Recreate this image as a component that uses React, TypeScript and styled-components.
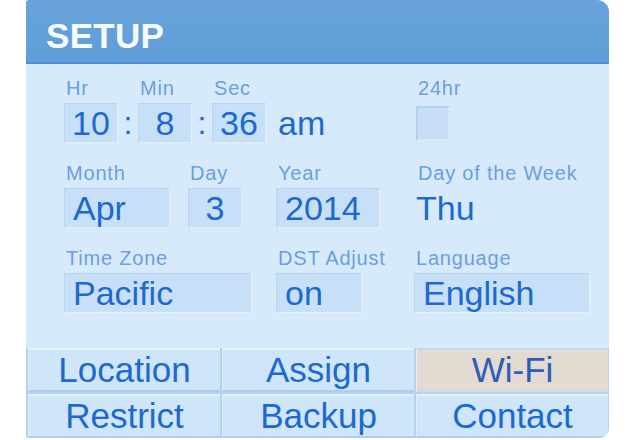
import React from "react";
import styled, { createGlobalStyle } from "styled-components";

const GlobalStyle = createGlobalStyle`
  html, body {
    margin: 0;
    padding: 0;
    background: #ffffff;
  }
  body {
    font-family: "Liberation Sans", Arial, sans-serif;
  }
`;

const buttons = [
  { label: "Location" },
  { label: "Assign" },
  { label: "Wi-Fi", active: true },
  { label: "Restrict" },
  { label: "Backup" },
  { label: "Contact" },
];

export default function App() {
  return (
    <>
      <GlobalStyle />
      <Page>
        <Screen>
          <Header>
            <Title>SETUP</Title>
          </Header>
          <Form>
            <Row>
              <Field $w={54}>
                <Label>Hr</Label>
                <Box $align="center">10</Box>
              </Field>
              <Colon>:</Colon>
              <Field $w={54}>
                <Label>Min</Label>
                <Box $align="center">8</Box>
              </Field>
              <Colon>:</Colon>
              <Field $w={54}>
                <Label>Sec</Label>
                <Box $align="center">36</Box>
              </Field>
              <Plain $ml={12}>am</Plain>
              <PushedField $w={174}>
                <Label>24hr</Label>
                <CheckSlot>
                  <Check />
                </CheckSlot>
              </PushedField>
            </Row>
            <Row>
              <Field $w={106}>
                <Label>Month</Label>
                <Box>Apr</Box>
              </Field>
              <Field $w={54} $ml={18}>
                <Label>Day</Label>
                <Box $align="center">3</Box>
              </Field>
              <Field $w={104} $ml={34}>
                <Label>Year</Label>
                <Box>2014</Box>
              </Field>
              <Field $w={174} $ml={36}>
                <Label>Day of the Week</Label>
                <Plain>Thu</Plain>
              </Field>
            </Row>
            <Row>
              <Field $w={188}>
                <Label>Time Zone</Label>
                <Box>Pacific</Box>
              </Field>
              <Field $w={86} $ml={24}>
                <Label>DST Adjust</Label>
                <Box>on</Box>
              </Field>
              <Field $w={176} $ml={52}>
                <Label>Language</Label>
                <Box>English</Box>
              </Field>
            </Row>
          </Form>
          <ButtonGrid>
            {buttons.map(b => (
              <MenuButton key={b.label} $active={b.active}>
                {b.label}
              </MenuButton>
            ))}
          </ButtonGrid>
        </Screen>
      </Page>
    </>
  );
}

const Page = styled.div`
  width: 640px;
  height: 440px;
  padding-left: 26px;
  box-sizing: border-box;
`;

const Screen = styled.div`
  width: 583px;
  height: 438px;
  display: flex;
  flex-direction: column;
  background: #d7eafb;
  border-radius: 3px 12px 10px 2px;
  overflow: hidden;
`;

const Header = styled.div`
  height: 64px;
  box-sizing: border-box;
  padding: 16px 0 0 20px;
  background: linear-gradient(180deg, #68a3da 0%, #609dd7 100%);
  border-bottom: 2px solid #4b8fd6;
`;

const Title = styled.h1`
  margin: 0;
  font-size: 35px;
  line-height: 40px;
  font-weight: 700;
  color: #f7fbff;
  letter-spacing: 0.3px;
`;

const Form = styled.div`
  display: flex;
  flex-direction: column;
  gap: 19px;
  padding: 13px 19px 0 38px;
`;

const Row = styled.div`
  display: flex;
  align-items: flex-end;
`;

const Field = styled.div<{ $w: number; $ml?: number }>`
  display: flex;
  flex-direction: column;
  gap: 4px;
  width: ${p => p.$w}px;
  margin-left: ${p => p.$ml ?? 0}px;
  flex-shrink: 0;
`;

const PushedField = styled(Field)`
  margin-left: auto;
`;

const Label = styled.div`
  height: 22px;
  line-height: 22px;
  padding-left: 2px;
  font-size: 20px;
  color: #6a9fe0;
  letter-spacing: 0.8px;
  white-space: nowrap;
`;

const Box = styled.div<{ $align?: "left" | "center" }>`
  height: 40px;
  box-sizing: border-box;
  padding: 0 ${p => (p.$align === "center" ? 0 : 8)}px;
  text-align: ${p => p.$align ?? "left"};
  line-height: 38px;
  font-size: 34px;
  color: #1b69d1;
  background: #c8e0f7;
  border: 1px solid #b9d4f1;
  border-right-color: #e2effc;
  border-bottom-color: #e2effc;
  white-space: nowrap;
`;

const Colon = styled.div`
  width: 20px;
  height: 40px;
  line-height: 40px;
  text-align: center;
  font-size: 32px;
  color: #1b69d1;
  flex-shrink: 0;
`;

const Plain = styled.div<{ $ml?: number }>`
  height: 40px;
  line-height: 40px;
  margin-left: ${p => p.$ml ?? 0}px;
  font-size: 34px;
  color: #1b69d1;
  white-space: nowrap;
`;

const CheckSlot = styled.div`
  height: 40px;
  display: flex;
  align-items: center;
`;

const Check = styled.div`
  width: 34px;
  height: 35px;
  box-sizing: border-box;
  background: #c6ddf5;
  border: 2px solid #b5d0ef;
  border-right-color: #d8e9fb;
  border-bottom-color: #d8e9fb;
`;

const ButtonGrid = styled.div`
  margin-top: auto;
  display: grid;
  grid-template-columns: repeat(3, 1fr);
  grid-auto-rows: 44px;
  gap: 2px;
  padding: 0 1px 0 2px;
  background: #b4d1ef;
`;

const MenuButton = styled.div<{ $active?: boolean }>`
  display: flex;
  align-items: center;
  justify-content: center;
  box-sizing: border-box;
  font-size: 35px;
  color: ${p => (p.$active ? "#2b5fb6" : "#1b69d1")};
  background: ${p => (p.$active ? "#e3dad1" : "#cfe5fa")};
  border-top: 2px solid ${p => (p.$active ? "#c9d8ea" : "#e6f2fe")};
  border-bottom: 2px solid ${p => (p.$active ? "#d0dbe9" : "#aecdee")};
  border-left: 1px solid #deeefc;
  white-space: nowrap;
`;
